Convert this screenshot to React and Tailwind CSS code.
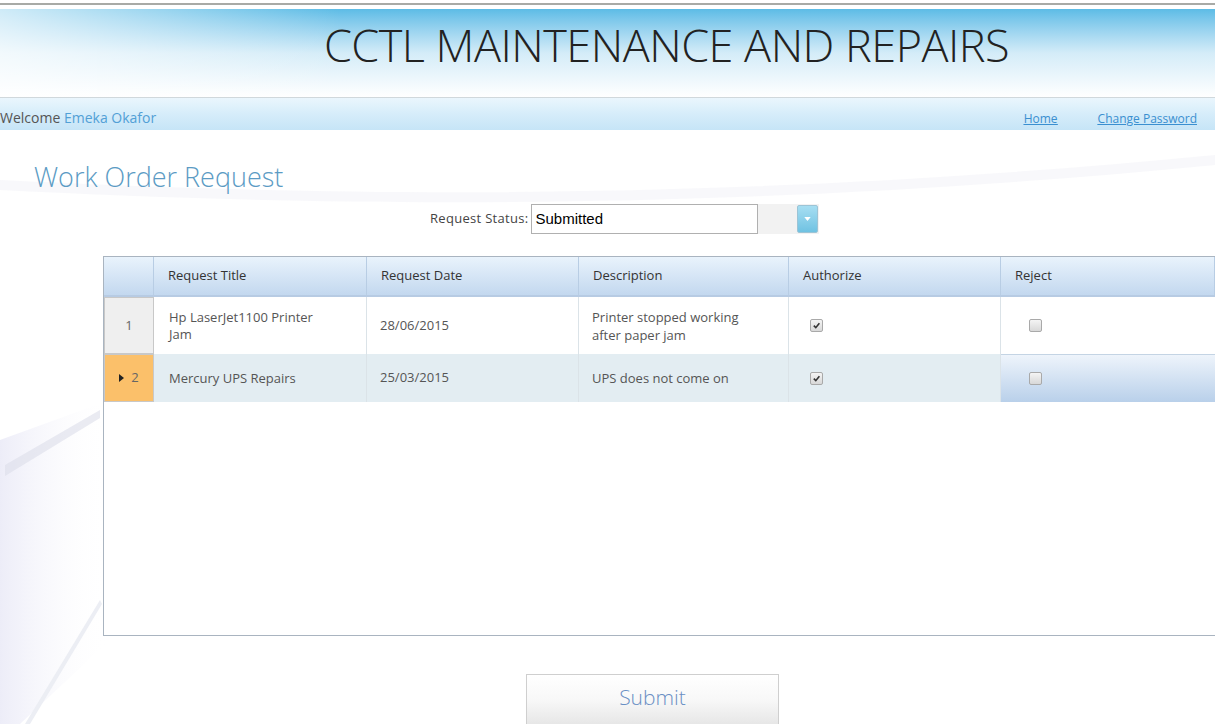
import React from "react";

const font = { fontFamily: '"Open Sans", "Noto Sans", sans-serif' };

const rows = [
  { n: 1, title: "Hp LaserJet1100 Printer Jam", date: "28/06/2015", desc: "Printer stopped working after paper jam", auth: true, reject: false },
  { n: 2, title: "Mercury UPS Repairs", date: "25/03/2015", desc: "UPS does not come on", auth: true, reject: false, current: true },
];

function Check({ checked }) {
  return (
    <span className="inline-flex h-[13px] w-[13px] items-center justify-center rounded-[2px] border border-[#a9a9a9] bg-gradient-to-b from-[#f4f4f4] to-[#d8d8d8]">
      {checked && (
        <svg viewBox="0 0 10 10" className="h-[9px] w-[9px]">
          <path d="M2 5.2 L4.2 7.4 L8.2 2.4" fill="none" stroke="#333" strokeWidth="1.8" />
        </svg>
      )}
    </span>
  );
}

function HeaderCell({ children, className = "" }) {
  return (
    <div className={`flex items-center border-r border-[#b8cde4] pl-[14px] text-[13px] text-[#333] ${className}`}>
      {children}
    </div>
  );
}

export default function App() {
  return (
    <div className="relative h-[724px] w-[1215px] overflow-hidden bg-white" style={font}>
      {/* faint swooshes in the page background */}
      <svg className="pointer-events-none absolute left-0 top-0 h-[724px] w-[1215px]" viewBox="0 0 1215 724">
        <defs>
          <linearGradient id="sw1" x1="0" y1="0" x2="1" y2="0">
            <stop offset="0" stopColor="#e8e8f6" />
            <stop offset="1" stopColor="#ffffff" stopOpacity="0" />
          </linearGradient>
        </defs>
        <path d="M0 440 L110 400 L110 640 L20 724 L0 724 Z" fill="url(#sw1)" opacity="0.8" />
        <path d="M5 465 L100 410 L100 418 L5 476 Z" fill="#dcdeea" opacity="0.6" />
        <path d="M25 724 L100 600 L102 604 L30 724 Z" fill="#eceef4" />
        <path d="M0 180 C300 195 700 205 1215 155 L1215 165 C700 215 300 205 0 190 Z" fill="#f1f2f8" opacity="0.5" />
      </svg>

      {/* top edge of the window above */}
      <div className="relative h-[9px] bg-white">
        <div className="absolute left-0 right-0 top-[3px] h-[2px] bg-[#a8aaa6]" />
      </div>

      {/* banner */}
      <div className="relative flex h-[88px] items-start justify-center bg-gradient-to-b from-[#5cbce6] via-[#d4ecf8] to-white">
        <div className="absolute inset-y-0 left-0 w-[340px] bg-gradient-to-r from-white/70 to-transparent" />
        <h1 className="relative ml-[118px] mt-[2px] text-[45px] font-light tracking-[-0.5px] text-[#222]">
          CCTL MAINTENANCE AND REPAIRS
        </h1>
      </div>

      {/* nav strip */}
      <div className="relative flex h-[33px] items-end justify-between border-t border-[#d0d8dc] bg-gradient-to-b from-[#eaf6fd] via-[#d6edfa] to-[#c6e5f7] pb-[2px] text-[14px]">
        <div className="text-[#555]">
          Welcome <span className="text-[#52a0d6]">Emeka Okafor</span>
        </div>
        <div className="mr-[18px] flex gap-[40px] text-[12px] text-[#3a8fd0] underline">
          <a>Home</a>
          <a>Change Password</a>
        </div>
      </div>

      <div className="relative">
        <h2 className="ml-[34px] mt-[32px] text-[27px] font-light leading-[30px] text-[#5b9bc4]">Work Order Request</h2>

        {/* status filter */}
        <div className="ml-[430px] mt-[12px] flex h-[30px] items-center">
          <span className="mr-[3px] text-[13px] tracking-[0.3px] text-[#444]">Request Status:</span>
          <div className="flex h-[30px] w-[288px] items-center bg-[#f2f2f2]">
            <div
              className="flex h-[30px] w-[227px] items-center border border-[#b0b0b0] bg-white pl-[3px] text-[15px] text-black"
              style={{ fontFamily: '"Liberation Sans", Arial, sans-serif' }}
            >
              Submitted
            </div>
            <div className="ml-auto mr-[1px] flex h-[28px] w-[21px] items-center justify-center rounded-[2px] border border-[#9cc4d6] bg-gradient-to-b from-[#a6def2] to-[#6fc2e2]">
              <svg viewBox="0 0 8 5" className="h-[4px] w-[7px]">
                <path d="M0 0 L8 0 L4 5 Z" fill="#ffffff" />
              </svg>
            </div>
          </div>
        </div>

        {/* grid */}
        <div className="ml-[103px] mt-[22px] flex h-[380px] w-[1112px] flex-col border border-r-0 border-[#a9b4c0] bg-white">
          <div className="flex h-[40px] border-b-2 border-[#b7cbe3] bg-gradient-to-b from-[#e9f3fc] to-[#c3d8ef]">
            <HeaderCell className="w-[50px]" />
            <HeaderCell className="w-[213px]">Request Title</HeaderCell>
            <HeaderCell className="w-[212px]">Request Date</HeaderCell>
            <HeaderCell className="w-[210px]">Description</HeaderCell>
            <HeaderCell className="w-[212px]">Authorize</HeaderCell>
            <HeaderCell className="flex-1">Reject</HeaderCell>
          </div>

          {rows.map((r) => (
            <div
              key={r.n}
              className={`flex text-[13px] text-[#555] ${r.current ? "h-[48px] bg-[#e3edf2]" : "h-[57px] bg-white"}`}
            >
              <div
                className={`flex w-[50px] items-center justify-center border border-[#c8c8c8] text-[13px] text-[#666] ${
                  r.current ? "bg-[#fbc06a]" : "bg-[#efefef]"
                }`}
              >
                {r.current && (
                  <svg viewBox="0 0 5 8" className="mr-[7px] h-[8px] w-[5px]">
                    <path d="M0 0 L5 4 L0 8 Z" fill="#222" />
                  </svg>
                )}
                {r.n}
              </div>
              <div className="flex w-[213px] items-center border-r border-[#dbe3e8] pl-[15px] pr-[40px] leading-[17px]">{r.title}</div>
              <div className="flex w-[212px] items-center border-r border-[#dbe3e8] pl-[13px]">{r.date}</div>
              <div className="flex w-[210px] items-center border-r border-[#dbe3e8] pl-[13px] pr-[30px] leading-[18px]">{r.desc}</div>
              <div className="flex w-[212px] items-center border-r border-[#dbe3e8] pl-[21px]">
                <Check checked={r.auth} />
              </div>
              <div
                className={`flex flex-1 items-center pl-[28px] ${
                  r.current ? "border-t border-[#c4d4e4] bg-gradient-to-b from-[#eef4fb] to-[#b9d0ea]" : ""
                }`}
              >
                <Check checked={r.reject} />
              </div>
            </div>
          ))}
        </div>

        {/* submit */}
        <div className="mt-[38px] flex justify-center pl-[90px]">
          <button className="h-[52px] w-[253px] border border-[#cfcfcf] bg-gradient-to-b from-white via-[#f8f8f8] to-[#e6e6e6] pb-[4px] text-[21px] font-light text-[#6a8fc4]">
            Submit
          </button>
        </div>
      </div>
    </div>
  );
}
